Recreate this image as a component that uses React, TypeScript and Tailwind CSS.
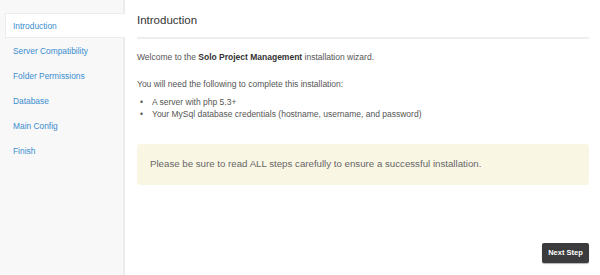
import React from "react";

const steps = ["Introduction", "Server Compatibility", "Folder Permissions", "Database", "Main Config", "Finish"];

export default function App() {
  return (
    <div className="flex w-[600px] h-[275px] bg-white text-[#555]" style={{ fontFamily: '"Liberation Sans", Arial, sans-serif' }}>
      <div className="w-[125px] h-full bg-[#f8f8f8] border-r-2 border-[#ececec] pt-[13px] pl-[5px] shrink-0">
        {steps.map((s, i) => (
          <div
            key={s}
            className={
              "h-[25px] flex items-center pl-[7px] pt-[1px] text-[8.4px] text-[#3a8dd0] " +
              (i === 0 ? "bg-white border border-r-0 border-[#ececec] mr-[-2px]" : "border border-transparent")
            }
          >
            {s}
          </div>
        ))}
      </div>
      <div className="flex-1 pl-[12px] pr-[11px] flex flex-col">
        <div className="h-[39px] border-b-2 border-[#eeeeee] flex items-center pt-[4px] text-[11.5px] text-[#333]">
          Introduction
        </div>
        <p className="text-[8.5px] mt-[12px] leading-[12px] text-[#555]">
          Welcome to the <b className="text-[#333]">Solo Project Management</b> installation wizard.
        </p>
        <p className="text-[8.5px] mt-[15px] leading-[12px] text-[#555]">You will need the following to complete this installation:</p>
        <div className="text-[8.5px] leading-[12px] mt-[6px] text-[#555]">
          <div className="flex">
            <span className="w-[15px] pl-[3px]">•</span>
            <span>A server with php 5.3+</span>
          </div>
          <div className="flex">
            <span className="w-[15px] pl-[3px]">•</span>
            <span>Your MySql database credentials (hostname, username, and password)</span>
          </div>
        </div>
        <div className="mt-[24px] h-[41px] bg-[#faf6e4] rounded-[3px] flex items-center pl-[13px] text-[9.7px] text-[#666]">
          Please be sure to read ALL steps carefully to ensure a successful installation.
        </div>
        <div className="flex justify-end mt-[58px]">
          <button className="w-[47px] h-[20px] bg-[#3b3b3d] rounded-[2px] text-white text-[7.5px] font-bold flex items-center justify-center shadow-[0_1px_1px_rgba(0,0,0,0.3)]">
            Next Step
          </button>
        </div>
      </div>
    </div>
  );
}
